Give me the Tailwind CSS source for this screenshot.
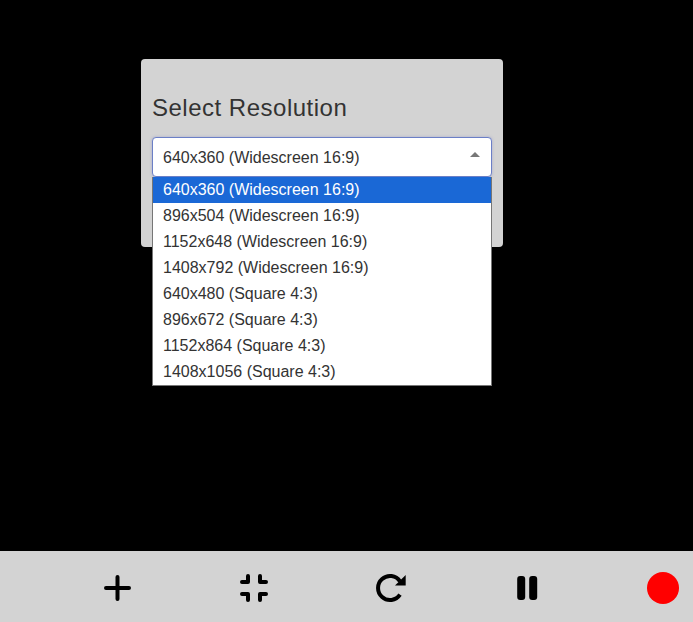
<!DOCTYPE html>
<html lang="en">
  <head>
    <meta charset="UTF-8" />
    <meta name="viewport" content="width=device-width, initial-scale=1.0" />
    <title>Select Resolution</title>
    <script src="https://cdn.jsdelivr.net/npm/@tailwindcss/browser@4"></script>
  </head>
  <body class="bg-black font-['Liberation_Sans',Arial,sans-serif] overflow-hidden">
    <div class="flex flex-col h-[622px] w-[693px]">
      <main class="flex-1 pt-[59px] pl-[141px]">
        <!-- resolution dialog -->
        <div class="w-[362px] h-[188px] bg-[#d3d3d3] rounded-[4px] px-[11px] pt-[35px] text-[#333]">
          <h2 class="text-[24px] leading-[28px] tracking-[0.5px] mb-[15px]">Select Resolution</h2>
          <div class="relative w-[340px]">
            <div class="flex items-center justify-between h-[40px] bg-white border border-[#6b7fc6] rounded-[4px] pl-[10px] pr-[10px] pt-[1px] text-[16px] shadow-[0_0_3px_rgba(90,100,200,0.35)]">
              <span>640x360 (Widescreen 16:9)</span>
              <span class="w-0 h-0 mb-[7px] mr-[1px] border-x-[5px] border-x-transparent border-b-[5px] border-b-[#777]"></span>
            </div>
            <ul class="absolute top-[40px] left-0 w-[340px] bg-white border-x border-b border-[#767676] text-[16px] leading-[26px]">
              <li class="h-[26px] pl-[10px] bg-[#1a68d6] text-white">640x360 (Widescreen 16:9)</li>
              <li class="h-[26px] pl-[10px]">896x504 (Widescreen 16:9)</li>
              <li class="h-[26px] pl-[10px]">1152x648 (Widescreen 16:9)</li>
              <li class="h-[26px] pl-[10px]">1408x792 (Widescreen 16:9)</li>
              <li class="h-[26px] pl-[10px]">640x480 (Square 4:3)</li>
              <li class="h-[26px] pl-[10px]">896x672 (Square 4:3)</li>
              <li class="h-[26px] pl-[10px]">1152x864 (Square 4:3)</li>
              <li class="h-[26px] pl-[10px]">1408x1056 (Square 4:3)</li>
            </ul>
          </div>
        </div>
      </main>

      <!-- bottom toolbar -->
      <footer class="h-[71px] bg-[#d3d3d3] flex items-center pt-[3px] pl-[101px] gap-[104.5px]">
        <svg class="w-8 h-8 shrink-0" viewBox="0 0 32 32" fill="none" stroke="#000" stroke-width="4" stroke-linecap="round">
          <path d="M5 16H28M16.500 5V27" />
        </svg>
        <svg class="w-8 h-8 shrink-0" viewBox="0 0 32 32" fill="none" stroke="#000" stroke-width="4" stroke-linecap="round" stroke-linejoin="round">
          <path d="M4 10H10V4M22 4V10H28M28 22H22V28M10 28V22H4" />
        </svg>
        <svg class="w-8 h-8 shrink-0" viewBox="0 0 32 32" fill="none">
          <path d="M26 22.700A12 12 0 1 1 26 9.300" stroke="#000" stroke-width="4" />
          <path d="M31.700 3V13.500H21Z" fill="#000" />
        </svg>
        <svg class="w-8 h-8 shrink-0" viewBox="0 0 32 32" fill="#000">
          <rect x="6.200" y="4" width="8" height="24" rx="3" />
          <rect x="18.200" y="4" width="8" height="24" rx="3" />
        </svg>
        <div class="w-8 h-8 shrink-0 rounded-full bg-[#ff0000]"></div>
      </footer>
    </div>
  </body>
</html>
